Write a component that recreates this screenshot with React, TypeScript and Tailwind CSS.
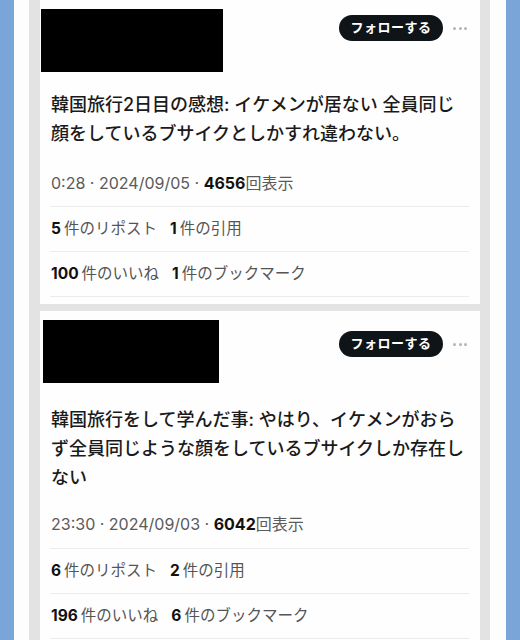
import React from "react";

type Row = { n: string; label: string }[];

function Stat({ items }: { items: Row }) {
  return (
    <div className="flex h-[45px] items-center gap-[13px] border-t border-[#ececec] pl-[1px] text-[15.5px]">
      {items.map((it, i) => (
        <span key={i} className="flex items-baseline">
          <span className="mr-[3px] font-bold text-[#111]">{it.n}</span>
          <span className="text-[#555]">{it.label}</span>
        </span>
      ))}
    </div>
  );
}

function Card({
  rectW,
  rectMl,
  btnMt,
  textMt,
  lines,
  time,
  views,
  row1,
  row2,
  metaGap,
}: {
  rectW: string;
  rectMl: string;
  btnMt: string;
  textMt: string;
  lines: string[];
  time: string;
  views: string;
  row1: Row;
  row2: Row;
  metaGap: string;
}) {
  return (
    <div className="flex shrink-0 flex-col bg-[#fefefe] pb-[7px]">
      <div className="flex items-start justify-between pt-[9px] pr-[13px]">
        <div className={`h-[63px] bg-black ${rectW} ${rectMl}`} />
        <div className={`flex items-center gap-[10px] ${btnMt}`}>
          <div className="flex h-[26px] w-[104px] items-center justify-center rounded-full bg-[#0f1419] text-[13px] font-bold tracking-[0.5px] text-white">
            フォローする
          </div>
          <div className="flex w-[14px] items-center justify-between">
            <span className="h-[3px] w-[3px] rounded-full bg-[#b5b5b5]" />
            <span className="h-[3px] w-[3px] rounded-full bg-[#b5b5b5]" />
            <span className="h-[3px] w-[3px] rounded-full bg-[#b5b5b5]" />
          </div>
        </div>
      </div>
      <div className={`pl-[11px] text-[18px] font-medium leading-[29px] whitespace-nowrap text-[#1a1a1a] ${textMt}`}>
        {lines.map((l, i) => (
          <div key={i}>{l}</div>
        ))}
      </div>
      <div className="flex flex-col pr-[11px] pl-[10px]">
        <div className={`h-[20px] pl-[1px] text-[16px] leading-[20px] text-[#5a5a5a] ${metaGap}`}>
          {time} · <span className="font-bold text-[#111]">{views}</span>回表示
        </div>
        <Stat items={row1} />
        <Stat items={row2} />
        <div className="border-t border-[#ececec]" />
      </div>
    </div>
  );
}

export default function App() {
  return (
    <div className="flex h-[640px] w-[520px] overflow-hidden font-['Inter','Noto_Sans_CJK_JP',sans-serif]">
      <div className="w-[14px] shrink-0 bg-[#7aa5d8]" />
      <div className="w-[15px] shrink-0 bg-[#fdfdfd]" />
      <div className="flex w-[461px] shrink-0 flex-col gap-[7px] bg-[#e3e3e3] pr-[10px] pl-[11px]">
        <Card
          rectW="w-[182px]"
          rectMl="ml-[1px]"
          btnMt="mt-[6px]"
          textMt="mt-[18px]"
          lines={["韓国旅行2日目の感想: イケメンが居ない 全員同じ", "顔をしているブサイクとしかすれ違わない。"]}
          time="0:28 · 2024/09/05"
          views="4656"
          metaGap="mt-[25px] mb-[13px]"
          row1={[
            { n: "5", label: "件のリポスト" },
            { n: "1", label: "件の引用" },
          ]}
          row2={[
            { n: "100", label: "件のいいね" },
            { n: "1", label: "件のブックマーク" },
          ]}
        />
        <Card
          rectW="w-[176px]"
          rectMl="ml-[3px]"
          btnMt="mt-[11px]"
          textMt="mt-[22px]"
          lines={[
            "韓国旅行をして学んだ事: やはり、イケメンがおら",
            "ず全員同じような顔をしているブサイクしか存在し",
            "ない",
          ]}
          time="23:30 · 2024/09/03"
          views="6042"
          metaGap="mt-[22px] mb-[14px]"
          row1={[
            { n: "6", label: "件のリポスト" },
            { n: "2", label: "件の引用" },
          ]}
          row2={[
            { n: "196", label: "件のいいね" },
            { n: "6", label: "件のブックマーク" },
          ]}
        />
      </div>
      <div className="w-[16px] shrink-0 bg-[#fdfdfd]" />
      <div className="w-[14px] shrink-0 bg-[#7aa5d8]" />
    </div>
  );
}
